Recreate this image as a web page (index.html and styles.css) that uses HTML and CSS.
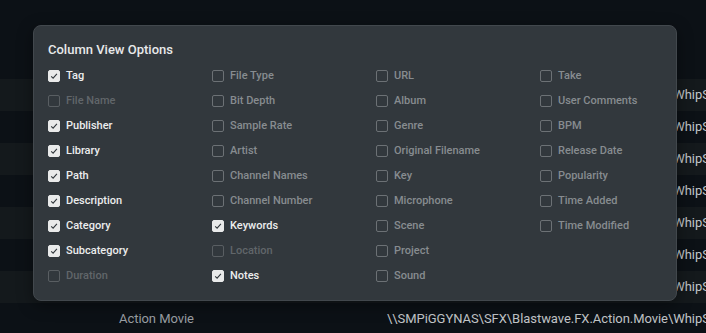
FILE: index.html
```html
<!DOCTYPE html>
<html lang="en">
<head>
      <meta charset="UTF-8">
      <meta name="viewport" content="width=device-width, initial-scale=1.0">
      <title>Column View Options</title>
      <link rel="stylesheet" href="styles.css">
</head>
<body>
      <div class="tabela">
            <div class="linha"><span></span><span class="cat">Action Movie</span><span class="path">\\SMPiGGYNAS\SFX\Blastwave.FX.Action.Movie\WhipSwoosh.wav</span></div>
            <div class="linha"><span></span><span class="cat">Action Movie</span><span class="path">\\SMPiGGYNAS\SFX\Blastwave.FX.Action.Movie\WhipSwoosh.wav</span></div>
            <div class="linha"><span></span><span class="cat">Action Movie</span><span class="path">\\SMPiGGYNAS\SFX\Blastwave.FX.Action.Movie\WhipSwoosh.wav</span></div>
            <div class="linha"><span></span><span class="cat">Action Movie</span><span class="path">\\SMPiGGYNAS\SFX\Blastwave.FX.Action.Movie\WhipSwoosh.wav</span></div>
            <div class="linha"><span></span><span class="cat">Action Movie</span><span class="path">\\SMPiGGYNAS\SFX\Blastwave.FX.Action.Movie\WhipSwoosh.wav</span></div>
            <div class="linha"><span></span><span class="cat">Action Movie</span><span class="path">\\SMPiGGYNAS\SFX\Blastwave.FX.Action.Movie\WhipSwoosh.wav</span></div>
            <div class="linha"><span></span><span class="cat">Action Movie</span><span class="path">\\SMPiGGYNAS\SFX\Blastwave.FX.Action.Movie\WhipSwoosh.wav</span></div>
            <div class="linha"><span></span><span class="cat">Action Movie</span><span class="path">\\SMPiGGYNAS\SFX\Blastwave.FX.Action.Movie\WhipSwoosh.wav</span></div>
      </div>

      <div class="modal">
            <h2>Column View Options</h2>
            <div class="opcoes" id="opcoes"></div>
      </div>

      <script>
            // coluna por coluna, de cima para baixo
            const colunas = [
                  [['Tag', 1], ['File Name', 2], ['Publisher', 1], ['Library', 1], ['Path', 1], ['Description', 1], ['Category', 1], ['Subcategory', 1], ['Duration', 2]],
                  [['File Type', 0], ['Bit Depth', 0], ['Sample Rate', 0], ['Artist', 0], ['Channel Names', 0], ['Channel Number', 0], ['Keywords', 1], ['Location', 2], ['Notes', 1]],
                  [['URL', 0], ['Album', 0], ['Genre', 0], ['Original Filename', 0], ['Key', 0], ['Microphone', 0], ['Scene', 0], ['Project', 0], ['Sound', 0]],
                  [['Take', 0], ['User Comments', 0], ['BPM', 0], ['Release Date', 0], ['Popularity', 0], ['Time Added', 0], ['Time Modified', 0]]
            ]

            const opcoes = document.getElementById('opcoes')
            const check = '<svg viewBox="0 0 12 12" width="12" height="12"><path d="M3.2 6.3 L5.1 8.1 L8.9 3.9" fill="none" stroke="#30363b" stroke-width="1.1"/></svg>'

            colunas.forEach(function(coluna){
                  const div = document.createElement('div')
                  div.className = 'coluna'
                  coluna.forEach(function(item){
                        const label = document.createElement('label')
                        label.className = 'opcao'
                        if (item[1] === 1) label.classList.add('marcado')
                        if (item[1] === 2) label.classList.add('desativado')
                        label.innerHTML = '<span class="caixa">' + (item[1] === 1 ? check : '') + '</span><span>' + item[0] + '</span>'
                        div.appendChild(label)
                  })
                  opcoes.appendChild(div)
            })
      </script>
</body>
</html>
```

FILE: styles.css
```css
*{
      padding: 0;
      margin: 0;
      box-sizing: border-box;
      font-family: Roboto, 'Liberation Sans', sans-serif;
}

body{
      background-color: #0c1116;
      width: 706px;
      height: 333px;
      overflow: hidden;
}

.tabela{
      padding-top: 79px;
}

.linha{
      display: grid;
      grid-template-columns: 119px 268px 1fr;
      height: 32px;
      line-height: 32px;
      font-size: 13px;
      letter-spacing: -0.05px;
      white-space: nowrap;
      overflow: hidden;
}

.linha:nth-child(odd){
      background-color: #14191c;
}

.cat{
      color: #9a9ea2;
}

.path{
      color: #c2c5c8;
}

.modal{
      position: absolute;
      left: 33px;
      top: 25px;
      width: 644px;
      height: 276px;
      background-color: #32383d;
      border: 1px solid #42484d;
      border-radius: 8px;
      padding: 15px 14px 12px 14px;
      box-shadow: 0 4px 16px rgba(0, 0, 0, 0.4);
}

.modal h2{
      font-size: 13px;
      font-weight: 500;
      line-height: 18px;
      color: #e8e9ea;
      margin-bottom: 4px;
}

.opcoes{
      display: grid;
      grid-template-columns: repeat(4, 164px);
}

.opcao{
      display: flex;
      align-items: center;
      gap: 6px;
      height: 25px;
      font-size: 11px;
      font-weight: 500;
      color: #878c90;
}

.caixa{
      width: 12px;
      height: 12px;
      border: 1px solid #6c7175;
      border-radius: 2px;
      display: flex;
      flex-shrink: 0;
}

.marcado{
      color: #eceded;
}

.marcado .caixa{
      background-color: #e9eaea;
      border-color: #e9eaea;
}

.marcado .caixa svg{
      margin: -1px;
}

.desativado{
      color: #61666a;
}

.desativado .caixa{
      border-color: #595e62;
}
```
